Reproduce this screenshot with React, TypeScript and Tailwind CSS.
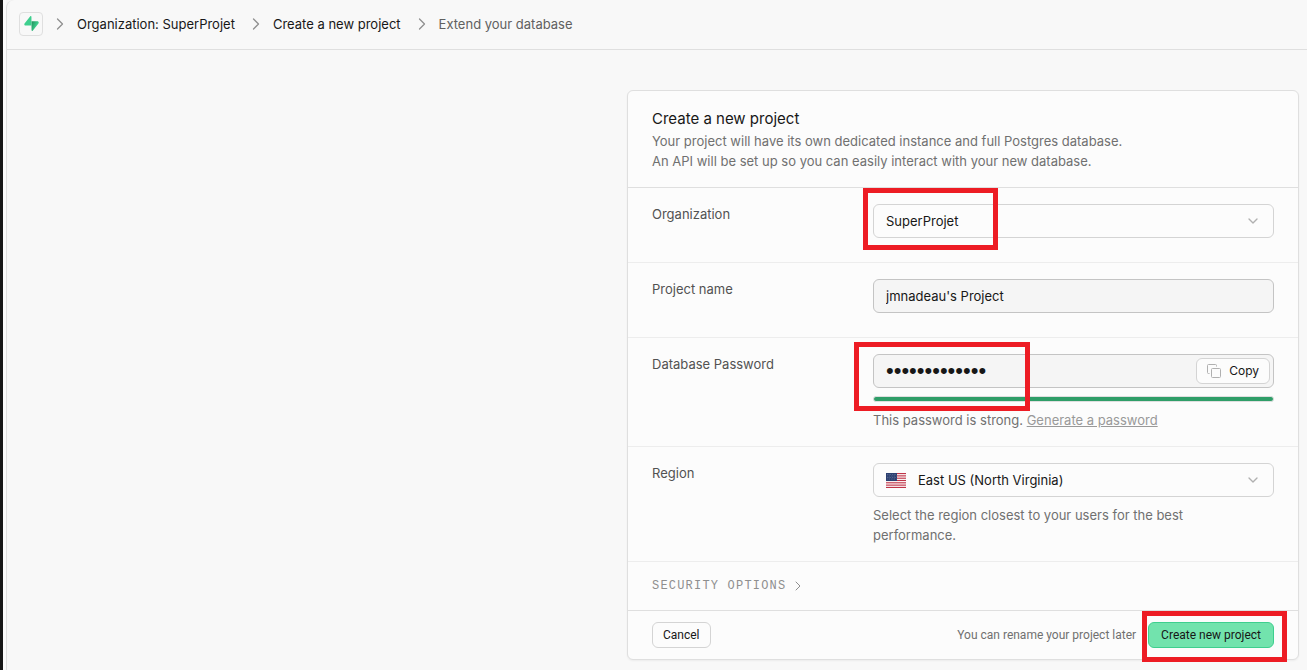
import type { ReactNode } from 'react'
import { ChevronDown, ChevronRight } from 'lucide-react'

function Highlight({ className }: { className: string }) {
  return <div aria-hidden="true" className={`pointer-events-none absolute border-[5px] border-[#ed1c24] ${className}`} />
}

function Row({ label, htmlFor, className, children }: { label: string; htmlFor: string; className: string; children: ReactNode }) {
  return (
    <div className={`grid grid-cols-[201px_1fr] gap-5 border-b border-[#ededed] px-6 pt-4 ${className}`}>
      <label htmlFor={htmlFor} className="h-5 text-[#525252]">
        {label}
      </label>
      <div>{children}</div>
    </div>
  )
}

function Logo() {
  return (
    <svg viewBox="0 0 109 113" className="h-[15px] w-[15px]" aria-hidden="true">
      <defs>
        <linearGradient id="bolt" x1="53.97" y1="54.97" x2="94.16" y2="71.83" gradientUnits="userSpaceOnUse">
          <stop stopColor="#249361" />
          <stop offset="1" stopColor="#3ecf8e" />
        </linearGradient>
      </defs>
      <path d="M63.708 110.284c-2.86 3.601-8.658 1.628-8.727-2.97l-1.007-67.251h45.22c8.19 0 12.758 9.46 7.665 15.874l-43.151 54.347Z" fill="url(#bolt)" />
      <path d="M45.317 2.071c2.86-3.601 8.657-1.628 8.726 2.97l.442 67.251H9.83c-8.19 0-12.759-9.46-7.665-15.875L45.317 2.072Z" fill="#3ecf8e" />
    </svg>
  )
}

function Flag() {
  return (
    <svg viewBox="0 0 20 15" className="pointer-events-none absolute top-[10px] left-[13px] h-[15px] w-5" aria-hidden="true">
      <rect width="20" height="15" fill="#fff" />
      {[0, 1, 2, 3, 4, 5, 6].map((i) => (
        <rect key={i} y={(i * 30) / 13} width="20" height={15 / 13} fill="#bf3448" />
      ))}
      <rect width="11" height="8" fill="#2b3f70" />
      <path d="M1 1.500h9M1.500 3h9M1 4.500h9M1.500 6h9" stroke="#8c98b5" strokeWidth=".6" strokeDasharray=".7 1" />
    </svg>
  )
}

function CopyIcon() {
  return (
    <svg viewBox="0 0 14 14" className="h-[14px] w-[14px] text-[#b0b0b0]" fill="none" stroke="currentColor" aria-hidden="true">
      <rect x="4.500" y="4.500" width="9" height="9" rx="1" />
      <path d="M2.500 9.500h-1a1 1 0 0 1-1-1v-7a1 1 0 0 1 1-1h7a1 1 0 0 1 1 1v1" />
    </svg>
  )
}

function Separator() {
  return <ChevronRight className="-mx-px h-5 w-5 text-[#8f8f8f]" strokeWidth={1.500} />
}

function Arrow() {
  return <ChevronDown className="pointer-events-none absolute top-[9px] right-[13px] h-4 w-4 text-[#b0b0b0]" strokeWidth={2} />
}

const control = 'block h-[34px] w-full appearance-none rounded-md border px-3 text-[#171717] outline-none'
const selectStyle = 'border-[#d4d4d4] bg-[#fcfcfc]'
const inputStyle = 'border-[#c4c4c4] bg-[#f5f5f5]'

export default function App() {
  return (
    <div className="flex min-h-screen bg-[#f8f8f8] font-['Inter',sans-serif] text-[13px] leading-5">
      <div className="w-[3px] bg-[#171717]" />
      <div className="w-[3px] bg-[#fcfcfc]" />
      <div className="min-w-0 flex-1 rounded-tl-lg border-l border-[#e0e0e0]">
        <header className="border-b border-[#dfdfdf]">
          <nav aria-label="Breadcrumb" className="flex h-[49px] items-center gap-2 px-3 pb-[2px] text-[#171717]">
            <a href="#" aria-label="Home" className="flex h-6 w-6 items-center justify-center rounded border border-[#dfdfdf]">
              <Logo />
            </a>
            <Separator />
            <a href="#" className="pr-1">Organization: SuperProjet</a>
            <Separator />
            <a href="#" className="pr-1">Create a new project</a>
            <Separator />
            <span className="text-[#606060]">Extend your database</span>
          </nav>
        </header>
        <main className="px-2 pt-10 pb-2">
          <form className="ml-auto max-w-2xl rounded-md border border-[#dfdfdf] bg-[#fcfcfc] shadow-xs" onSubmit={(e) => e.preventDefault()}>
            <div className="border-b border-[#dfdfdf] px-6 py-4">
              <h1 className="text-[15px] leading-6 text-[#171717]">Create a new project</h1>
              <p className="text-[#707070]">
                Your project will have its own dedicated instance and full Postgres database.
                <br />
                An API will be set up so you can easily interact with your new database.
              </p>
            </div>

            <Row label="Organization" htmlFor="organization" className="pb-6">
              <div className="relative">
                <select id="organization" className={`${control} ${selectStyle}`}>
                  <option>SuperProjet</option>
                </select>
                <Arrow />
                <Highlight className="-top-4 -left-[10px] h-[62px] w-[135px]" />
              </div>
            </Row>

            <Row label="Project name" htmlFor="project-name" className="pb-6">
              <input id="project-name" type="text" defaultValue="jmnadeau's Project" className={`${control} ${inputStyle}`} />
            </Row>

            <Row label="Database Password" htmlFor="password" className="pb-4">
              <div className="relative">
                <input id="password" type="password" defaultValue="abcdefghijklm" className={`${control} ${inputStyle} font-['Liberation_Sans',sans-serif] text-[22px]`} />
                <button type="button" className="absolute top-1 right-1 flex h-[26px] items-center gap-2 rounded-md border border-[#d4d4d4] bg-[#fcfcfc] px-[10px] text-xs text-[#171717]">
                  <CopyIcon />
                  Copy
                </button>
                <Highlight className="-top-3 -left-[19px] z-10 h-[69px] w-[176px]" />
              </div>
              <div className="mt-2 h-[6px] rounded-full border border-[#dfdfdf] bg-[#2f9e68]" />
              <p className="mt-2 text-[#707070]">
                This password is strong.{' '}
                <a href="#" className="text-[#999999] underline">
                  Generate a password
                </a>
              </p>
            </Row>

            <Row label="Region" htmlFor="region" className="pb-4">
              <div className="relative">
                <select id="region" className={`${control} ${selectStyle} pl-11`}>
                  <option>East US (North Virginia)</option>
                </select>
                <Flag />
                <Arrow />
              </div>
              <p className="mt-2 max-w-[340px] text-[#707070]">Select the region closest to your users for the best performance.</p>
            </Row>

            <div className="border-b border-[#dfdfdf] px-6 py-4">
              <button type="button" className="flex items-center gap-1 font-['Liberation_Mono',monospace] text-xs leading-4 tracking-widest text-[#8f8f8f] uppercase">
                Security options
                <ChevronRight className="h-4 w-4" strokeWidth={1.500} />
              </button>
            </div>

            <div className="flex h-12 items-center justify-between px-6 font-['Roboto',sans-serif] text-xs">
              <button type="button" className="h-[26px] rounded-md border border-[#d4d4d4] px-[10px] text-[#171717]">
                Cancel
              </button>
              <div className="flex items-center gap-3">
                <span className="text-[#707070]">You can rename your project later</span>
                <div className="relative">
                  <button type="submit" className="block h-[26px] rounded-md border border-[#3ecf8e] bg-[#72e3ad] px-3 text-[#171717]">
                    Create new project
                  </button>
                  <Highlight className="-top-[11px] -right-[13px] h-[51px] w-[145px]" />
                </div>
              </div>
            </div>
          </form>
        </main>
      </div>
    </div>
  )
}
